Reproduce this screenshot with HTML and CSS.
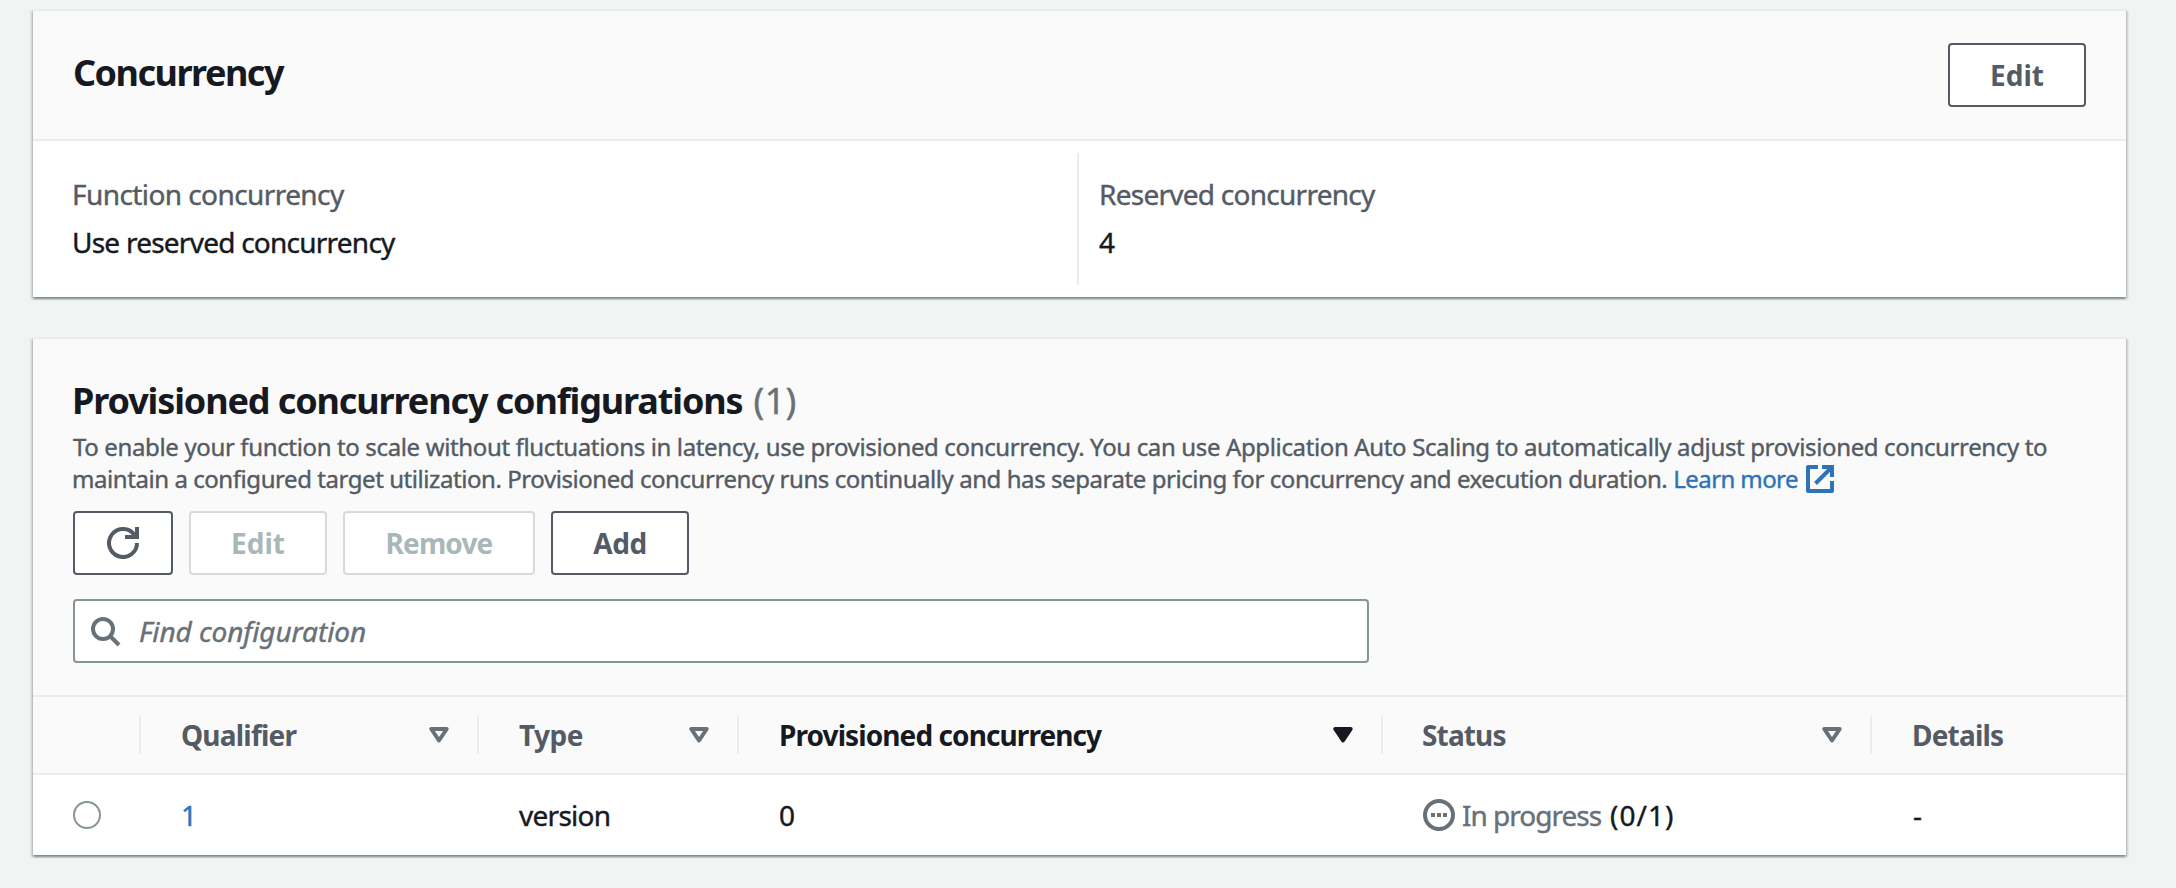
FILE: index.html
```html
<!DOCTYPE html>
<html lang="en">
<head>
<meta charset="utf-8">
<title>Concurrency</title>
<link rel="stylesheet" href="styles.css">
</head>
<body>
<section class="card">
  <header class="card-head">
    <h2 class="title title-short">Concurrency</h2>
    <button class="btn btn-edit"><span>Edit</span></button>
  </header>
  <div class="pairs">
    <div class="pair">
      <div class="label">Function concurrency</div>
      <div class="value">Use reserved concurrency</div>
    </div>
    <div class="pair pair-split">
      <div class="label">Reserved concurrency</div>
      <div class="value">4</div>
    </div>
  </div>
</section>

<section class="card">
  <div class="config-head">
    <h2 class="title title-long">Provisioned concurrency configurations<span class="count">(1)</span></h2>
    <p class="desc"><span class="line1">To enable your function to scale without fluctuations in latency, use provisioned concurrency. You can use Application Auto Scaling to automatically adjust provisioned concurrency to</span><br><span class="line2">maintain a configured target utilization. Provisioned concurrency runs continually and has separate pricing for concurrency and execution duration.</span><a class="learn">Learn more<svg class="ext" viewBox="0 0 28 28" width="28" height="28"><path d="M12 2H2v24h24V16" fill="none" stroke="currentColor" stroke-width="4" stroke-linejoin="round"/><path d="M16 2h10v10M25 3 9.5 18.500" fill="none" stroke="currentColor" stroke-width="4"/></svg></a></p>
    <div class="actions">
      <button class="btn btn-refresh" aria-label="Refresh"><svg viewBox="0 0 32 32" width="32" height="32" fill="none" stroke="currentColor" stroke-width="4"><path d="M30 16A14 14 0 1 1 27.500 8"/><path d="M30 0v10H18"/></svg></button>
      <button class="btn btn-edit btn-off"><span>Edit</span></button>
      <button class="btn btn-remove btn-off"><span>Remove</span></button>
      <button class="btn btn-add"><span>Add</span></button>
    </div>
    <div class="search">
      <svg viewBox="0 0 32 32" width="32" height="32" fill="none" stroke="currentColor" stroke-width="4"><circle cx="14" cy="14" r="10"/><path d="M21 21l9 9"/></svg>
      <span>Find configuration</span>
    </div>
  </div>
  <div class="row row-head">
    <div class="cell"></div>
    <div class="cell"><span class="qual">Qualifier</span><svg class="sort" viewBox="0 0 20 16"><path d="M2.300 2h15.400L10 13.500z"/></svg></div>
    <div class="cell"><span class="type">Type</span><svg class="sort" viewBox="0 0 20 16"><path d="M2.300 2h15.400L10 13.500z"/></svg></div>
    <div class="cell sorted"><span class="prov">Provisioned concurrency</span><svg class="sort" viewBox="0 0 20 16"><path d="M2.300 2h15.400L10 13.500z"/></svg></div>
    <div class="cell"><span class="stat">Status</span><svg class="sort" viewBox="0 0 20 16"><path d="M2.300 2h15.400L10 13.500z"/></svg></div>
    <div class="cell"><span class="det">Details</span></div>
  </div>
  <div class="row row-body">
    <div class="cell"><i class="radio"></i></div>
    <div class="cell"><a class="one">1</a></div>
    <div class="cell"><span class="version">version</span></div>
    <div class="cell"><span class="zero">0</span></div>
    <div class="cell"><svg class="pending" viewBox="0 0 32 32" width="32" height="32"><circle cx="16" cy="16" r="14" fill="none" stroke="currentColor" stroke-width="4"/><path d="M8 14h4v4H8zM14 14h4v4h-4zM20 14h4v4h-4z" fill="currentColor"/></svg><span class="progress">In progress</span><span class="ratio">(0/1)</span></div>
    <div class="cell"><span class="dash">-</span></div>
  </div>
</section>
</body>
</html>
```
FILE: styles.css
```css
* { box-sizing: border-box; }

body {
  margin: 0;
  padding: 9px 50px 0 33px;
  height: 888px;
  overflow: hidden;
  background: #f2f3f3;
  color: #16191f;
  font-family: "Noto Sans", "Open Sans", sans-serif;
  font-size: 28px;
  white-space: nowrap;
}

.card {
  margin-bottom: 40px;
  background: #fff;
  border-top: 2px solid #eaeded;
  box-shadow: 0 2px 2px rgba(0, 28, 36, .3), 2px 2px 2px rgba(0, 28, 36, .15), -2px 2px 2px rgba(0, 28, 36, .15);
}

.card-head {
  display: flex;
  justify-content: space-between;
  align-items: center;
  height: 130px;
  padding: 0 40px;
  background: #fafafa;
  border-bottom: 2px solid #eaeded;
}

.title {
  margin: 0;
  font-size: 36px;
  line-height: 44px;
  font-weight: 700;
}
.title-short { padding-bottom: 4px; letter-spacing: -1.5px; }
.title-long { margin-left: -1px; padding-top: 1px; letter-spacing: -1.12px; }
.count { margin-left: 11px; color: #687078; font-weight: 400; letter-spacing: .3px; }

/* Regular-weight text is drawn slightly heavier than the family's 400 */
.label, .value, .desc, .count, .search span, .row-body .cell {
  -webkit-text-stroke: .4px currentColor;
}

.btn {
  display: flex;
  align-items: center;
  justify-content: center;
  height: 64px;
  padding: 0;
  background: #fff;
  border: 2px solid #545b64;
  border-radius: 4px;
  color: #545b64;
  font: 700 28px "Noto Sans", "Open Sans", sans-serif;
}
.btn span { padding-bottom: 1px; }
.btn-edit { width: 138px; }
.btn-refresh { width: 100px; }
.btn-remove { width: 192px; letter-spacing: -.86px; }
.btn-add { width: 138px; letter-spacing: -.4px; }
.btn-off { border-color: #d5dbdb; color: #aab7b8; }

.pairs {
  display: grid;
  grid-template-columns: 1044px 1fr;
  padding: 12px 0;
  line-height: 48px;
}
.pair { height: 132px; padding: 17px 0 0 39px; }
.pair-split { border-left: 2px solid #eaeded; padding-left: 20px; }
.label { color: #545b64; letter-spacing: -.58px; }
.pair-split .label { letter-spacing: -.74px; }
.value { letter-spacing: -.76px; }

.config-head { padding: 39px 40px 32px; background: #fafafa; }

.desc {
  margin: 8px 0 16px;
  height: 64px;
  color: #545b64;
  font-size: 24px;
  line-height: 32px;
}
.line1 { letter-spacing: -.358px; }
.line2 { margin-left: -1px; letter-spacing: -.438px; }
.learn { margin-left: 6px; color: #2e73b8; letter-spacing: -.6px; }
.ext { margin-left: 8px; vertical-align: -5px; }

.actions { display: flex; gap: 16px; margin-bottom: 24px; }

.search {
  display: flex;
  align-items: center;
  width: 1296px;
  height: 64px;
  padding-left: 14px;
  background: #fff;
  border: 2px solid #879596;
  border-radius: 4px;
  color: #687078;
  font-style: italic;
}
.search span { margin-left: 18px; letter-spacing: -.075px; }

.row {
  display: grid;
  grid-template-columns: 108px 338px 260px 644px 489px 1fr;
}
.row-head {
  height: 80px;
  background: #fafafa;
  border: solid #eaeded;
  border-width: 2px 0;
  color: #545b64;
  font-weight: 700;
}
.row-body { height: 80px; }
.cell { display: flex; align-items: center; padding-left: 40px; }
.cell span, .cell a { padding-bottom: 1px; }
.row-head .cell:not(:last-child)::after {
  content: "";
  width: 2px;
  height: 38px;
  margin-left: auto;
  background: #eaeded;
}
.sort {
  width: 20px;
  height: 16px;
  margin: 0 -1px 0 auto;
  fill: none;
  stroke: #687078;
  stroke-width: 4;
  stroke-linejoin: round;
}
.row-head .cell:has(.sort)::after { margin-left: 29px; }
.sorted { color: #16191f; }
.sorted .sort { fill: #16191f; stroke: #16191f; }

.qual { letter-spacing: -.78px; }
.type { letter-spacing: -.5px; }
.prov { letter-spacing: -.91px; }
.stat { margin-left: -1px; letter-spacing: -.85px; }
.det { letter-spacing: -.81px; }
.version { letter-spacing: -.72px; }
.one { color: #2e73b8; }

.radio {
  width: 28px;
  height: 28px;
  border: 2px solid #879596;
  border-radius: 50%;
}
.pending { color: #687078; }
.progress { margin-left: 7px; color: #687078; letter-spacing: -1px; }
.ratio { margin-left: 9px; letter-spacing: 1.04px; }
.dash { margin-left: 1px; }
```
